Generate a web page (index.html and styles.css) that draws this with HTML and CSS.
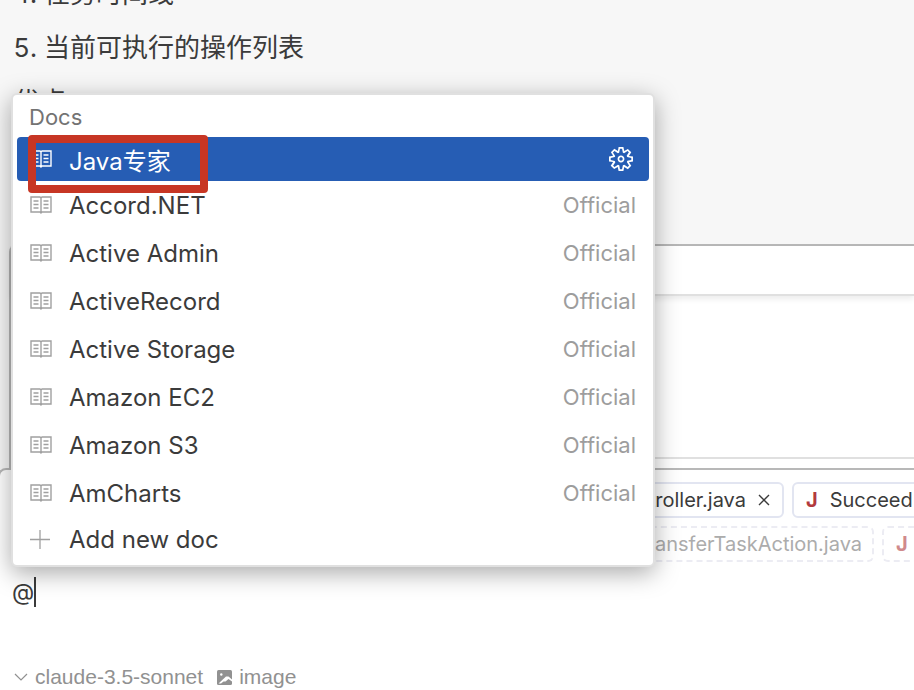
FILE: index.html
```
<!DOCTYPE html>
<html lang="zh">
  <head>
    <meta charset="utf-8">
    <title>Chat</title>
    <link rel="stylesheet" href="styles.css">
  </head>
  <body>
    <svg class="sprite" aria-hidden="true">
      <symbol id="book" viewBox="0 0 22 19">
        <path d="M1 1h9l1 1 1-1h9v15h-9l-1 1-1-1H1zM11 2v16" fill="none" stroke="currentColor" stroke-width="1.4"/>
        <path d="M3.5 5h5M3.5 8.5h5M3.5 12h5M13.5 5h5M13.5 8.5h5M13.5 12h5" fill="none" stroke="currentColor" stroke-width="1.3"/>
      </symbol>
    </svg>

    <main class="chat">
      <ol start="4">
        <li>任务时间线</li>
        <li>当前可执行的操作列表</li>
      </ol>
      <p>优点</p>
    </main>

    <section class="code-card">
      <div class="code-header"></div>
      <div class="code-body"></div>
    </section>

    <section class="composer">
      <div class="chips">
        <div class="chip first">
          <span>Controller.java</span>
          <button class="close" aria-label="Remove">
            <svg width="12" height="12" viewBox="0 0 12 12"><path d="M1 1l10 10M11 1L1 11" stroke="currentColor" stroke-width="1.4"/></svg>
          </button>
        </div>
        <div class="chip"><b>J</b><span>Succeed</span></div>
      </div>
      <div class="chips">
        <div class="chip suggested first wide"><span>TransferTaskAction.java</span></div>
        <div class="chip suggested next"><b>J</b></div>
      </div>

      <div class="prompt">
        <textarea rows="1" aria-label="Message">@</textarea>
        <span class="caret"></span>
      </div>

      <footer>
        <button class="model">
          <svg width="14" height="8" viewBox="0 0 14 8"><path d="M1 1l6 6 6-6" fill="none" stroke="currentColor" stroke-width="1.2"/></svg>
          claude-3.5-sonnet
        </button>
        <button class="image">
          <svg width="15" height="15" viewBox="0 0 15 15">
            <rect width="15" height="15" rx="1.5" fill="currentColor"/>
            <circle cx="4.300" cy="4.500" r="1.200" fill="#fff"/>
            <path d="M1.500 13.500L9 6.500h2.500l3.500 3V11.500l-3.500-2.500L8.500 11.500H6.500L4 13.500z" fill="#fff"/>
          </svg>
          image
        </button>
      </footer>

      <div class="menu">
        <h2>Docs</h2>
        <ul>
          <li class="selected">
            <button>
              <svg class="icon"><use href="#book"/></svg>
              <span class="name">Java专家</span>
              <svg class="gear" viewBox="1 1 14 14"><path fill="currentColor" fill-rule="evenodd" d="M9.1 4.4L8.6 2H7.4l-.5 2.4-.7.3-2-1.3-.9.8 1.3 2-.2.7-2.4.5v1.2l2.4.5.3.8-1.3 2 .8.8 2-1.3.8.3.4 2.3h1.2l.5-2.4.8-.3 2 1.3.8-.8-1.3-2 .3-.8 2.3-.4V7.4l-2.4-.5-.3-.8 1.3-2-.8-.8-2 1.3-.7-.2zM9.4 1l.5 2.4L12 2.1l2 2-1.4 2.1 2.4.4v2.8l-2.4.5L14 12l-2 2-2.1-1.4-.5 2.4H6.6l-.5-2.4L4 13.9l-2-2 1.4-2.1L1 9.4V6.6l2.4-.5L2.1 4l2-2 2.1 1.4.4-2.4h2.8zm.6 7c0 1.1-.9 2-2 2s-2-.9-2-2 .9-2 2-2 2 .9 2 2zM8 9c.6 0 1-.4 1-1s-.4-1-1-1-1 .4-1 1 .4 1 1 1z"/></svg>
            </button>
            <span class="highlight"></span>
          </li>
          <li><button><svg class="icon"><use href="#book"/></svg><span class="name">Accord.NET</span><span class="tag">Official</span></button></li>
          <li><button><svg class="icon"><use href="#book"/></svg><span class="name">Active Admin</span><span class="tag">Official</span></button></li>
          <li><button><svg class="icon"><use href="#book"/></svg><span class="name">ActiveRecord</span><span class="tag">Official</span></button></li>
          <li><button><svg class="icon"><use href="#book"/></svg><span class="name">Active Storage</span><span class="tag">Official</span></button></li>
          <li><button><svg class="icon"><use href="#book"/></svg><span class="name">Amazon EC2</span><span class="tag">Official</span></button></li>
          <li><button><svg class="icon"><use href="#book"/></svg><span class="name">Amazon S3</span><span class="tag">Official</span></button></li>
          <li><button><svg class="icon"><use href="#book"/></svg><span class="name">AmCharts</span><span class="tag">Official</span></button></li>
          <li class="add">
            <button>
              <svg class="icon" viewBox="0 0 22 19"><path d="M10 0v19M0 9.5h20" stroke="currentColor" stroke-width="1.3"/></svg>
              <span class="name">Add new doc</span>
            </button>
          </li>
        </ul>
      </div>
    </section>
  </body>
</html>
```

FILE: styles.css
```
* {
  box-sizing: border-box;
}

body {
  margin: 0;
  height: 100vh;
  display: flex;
  flex-direction: column;
  overflow: hidden;
  background: #f7f7f7;
  color: #3b3b3b;
  font-family: Inter, "Noto Sans CJK SC", sans-serif;
}

button {
  padding: 0;
  border: none;
  background: none;
  color: inherit;
  font: inherit;
  cursor: pointer;
}

.sprite {
  display: none;
}

/* conversation */
.chat {
  flex: 1;
  min-height: 0;
  display: flex;
  flex-direction: column;
  justify-content: flex-end;
  padding: 0 14px 120px;
  overflow: hidden;
  font-size: 26px;
  line-height: 44px;
}

.chat ol,
.chat p {
  margin: 0;
}

.chat ol {
  padding-left: 30px;
}

.chat li,
.chat p {
  margin-top: 10px;
}

.code-card {
  margin-left: 9px;
  padding-bottom: 9px;
  border: 2px solid #b8b8b8;
  border-width: 2px 0 0 2px;
  border-radius: 8px 0 0 0;
  background: #fff;
}

.code-header {
  height: 50px;
  border-bottom: 2px solid #e0e0e0;
  box-shadow: 0 3px 6px rgba(0, 0, 0, 0.08);
}

.code-body {
  height: 163px;
  border-bottom: 2px solid #e0e0e0;
}

/* message box */
.composer {
  position: relative;
  margin-left: -2px;
  padding: 12px 0 0 12px;
  border: 2px solid #b8b8b8;
  border-width: 2px 0 0 2px;
  border-radius: 8px 0 0 0;
  background: #fff;
  white-space: nowrap;
}

.chips {
  display: flex;
  gap: 8px;
  margin-bottom: 8px;
  overflow: hidden;
}

.chip {
  flex: none;
  display: flex;
  align-items: center;
  gap: 12px;
  height: 36px;
  padding: 0 10px 0 12px;
  border: 2px solid #e2e5f1;
  border-radius: 6px;
  font-size: 20px;
}

.chip.first {
  width: 300px;
  margin-left: 472px;
  justify-content: flex-end;
}

.chip.wide {
  width: 390px;
}

.chip.next {
  width: 200px;
}

.chip b {
  color: #b23a3e;
}

.chip.suggested {
  border-style: dashed;
  border-color: #ececf3;
  color: #acacac;
}

.suggested b {
  color: #d08a8c;
}

.close {
  display: flex;
  margin-right: 2px;
}

.prompt {
  position: relative;
  height: 96px;
  padding-top: 6px;
}

.prompt textarea {
  display: block;
  width: 100%;
  height: 32px;
  padding: 0;
  border: none;
  outline: none;
  resize: none;
  overflow: hidden;
  background: none;
  color: inherit;
  font: 23px/32px Inter, sans-serif;
}

.caret {
  position: absolute;
  top: 7px;
  left: 22px;
  width: 2px;
  height: 30px;
  background: #3b3b3b;
}

footer {
  display: flex;
  gap: 14px;
  height: 22px;
  margin-bottom: 2px;
  padding-left: 2px;
  color: #919191;
  font: 21px/22px "Liberation Sans", sans-serif;
}

footer button {
  display: flex;
  align-items: center;
  gap: 7px;
}

/* docs menu */
.menu {
  position: absolute;
  left: 11px;
  bottom: 123px;
  width: 644px;
  padding: 0 4px 4px;
  border: 2px solid #e0e0e0;
  border-radius: 6px;
  background: #fff;
  box-shadow: 0 6px 24px rgba(0, 0, 0, 0.34);
  font-size: 24px;
}

.menu h2 {
  margin: 0;
  padding: 3px 12px 0;
  color: #737373;
  font-size: 22px;
  font-weight: 400;
  line-height: 39px;
}

.menu ul {
  margin: 0;
  padding: 0;
  list-style: none;
}

.menu li {
  position: relative;
}

.menu button {
  display: flex;
  align-items: center;
  width: 100%;
  height: 48px;
  padding: 0 13px;
  text-align: left;
}

.menu .selected button,
.menu .add button {
  height: 44px;
}

.menu .selected button {
  border-radius: 4px;
  background: #265db4;
  color: #fff;
}

.icon {
  width: 22px;
  height: 19px;
  margin-right: 17px;
  color: #a0a0a0;
}

.selected .icon {
  color: #fff;
}

.name {
  flex: 1;
}

.gear {
  width: 24px;
  height: 24px;
  margin-right: 3px;
}

.tag {
  color: #9d9d9d;
  font-size: 22px;
}

.highlight {
  position: absolute;
  top: -2px;
  left: 11px;
  width: 180px;
  height: 58px;
  border: 8px solid #c73624;
  border-radius: 4px;
  z-index: 1;
  pointer-events: none;
}
```
